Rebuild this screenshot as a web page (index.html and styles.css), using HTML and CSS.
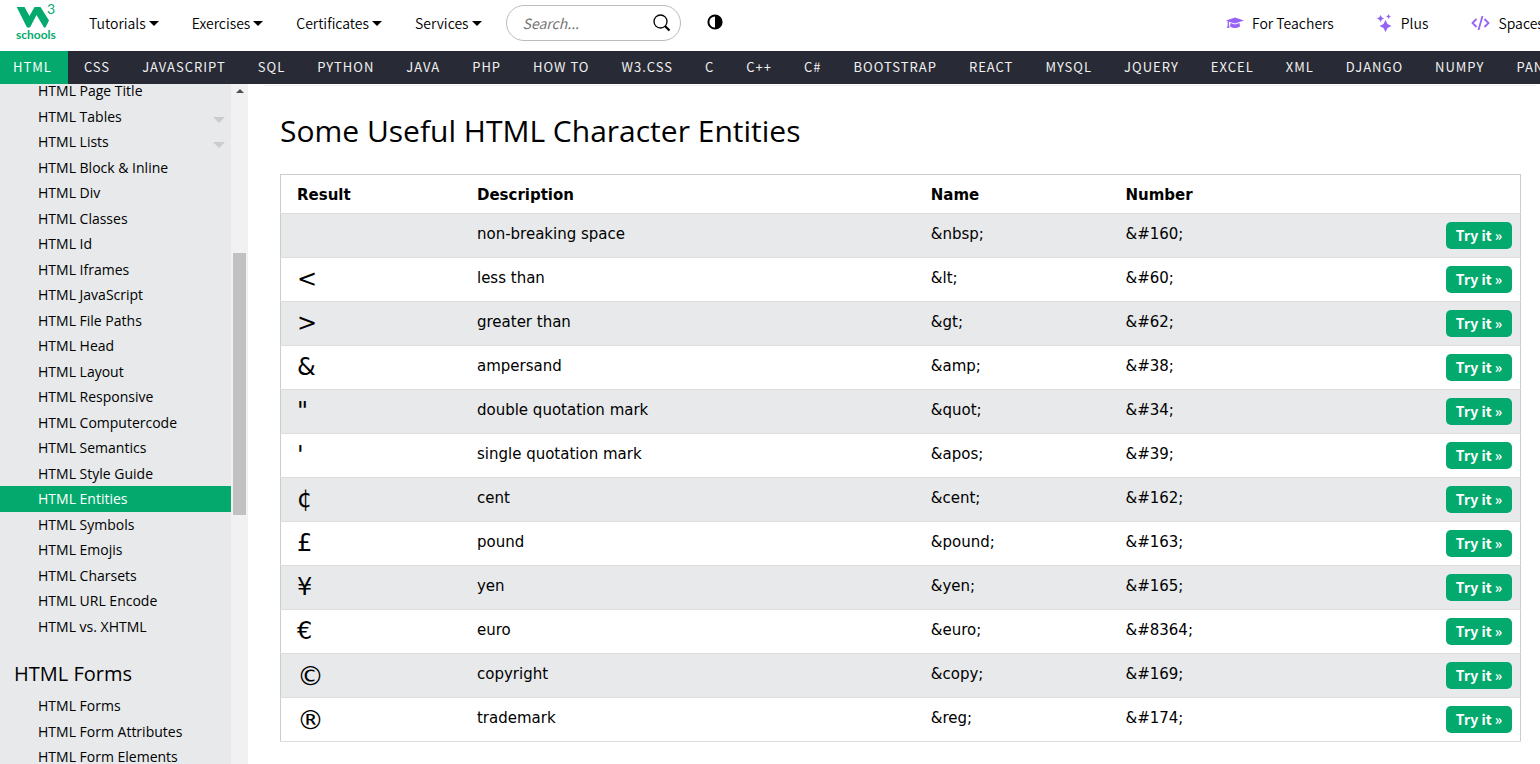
FILE: index.html
```html
<!DOCTYPE html>
<html lang="en">
<head>
<meta charset="utf-8">
<title>HTML Entities</title>
<link rel="stylesheet" href="styles.css">
</head>
<body>
<header class="topbar">
  <a class="logo" href="#" aria-label="W3Schools home">
    <svg width="44" height="40" viewBox="0 0 44 40">
      <path d="M0.700 4H8.500L13.500 13L18.500 4H24.500L33 17.500L29.500 24.500H28L20.500 12L14 24.500H11Z" fill="#04aa6d"/>
      <text x="31" y="11" class="logo-three">3</text>
      <text x="0" y="36" class="logo-word">schools</text>
    </svg>
  </a>
  <nav class="menus">
    <button class="menu">Tutorials<span class="caret"></span></button>
    <button class="menu">Exercises<span class="caret"></span></button>
    <button class="menu">Certificates<span class="caret"></span></button>
    <button class="menu">Services<span class="caret"></span></button>
  </nav>
  <form class="search">
    <input class="search-input" type="text" placeholder="Search..." aria-label="Search">
    <button class="search-button" type="button" aria-label="Search">
      <svg width="18" height="18" viewBox="0 0 18 18" fill="none" stroke="#000"><circle cx="7.500" cy="7.500" r="6.500" stroke-width="1.300"/><path d="M12 12L16.500 16.500" stroke-width="2.200"/></svg>
    </button>
  </form>
  <button class="theme" type="button" aria-label="Toggle dark mode">
    <svg width="16" height="16" viewBox="0 0 16 16"><circle cx="8" cy="8" r="6.600" fill="#fff" stroke="#000" stroke-width="2"/><path d="M8 1A7 7 0 0 1 8 15Z"/></svg>
  </button>
  <nav class="services">
    <a class="service" href="#"><svg width="18" height="16" viewBox="0 0 18 16" fill="#9763f6"><path d="M9 2.500L18 5.500L9 8.500L3 6.800V10L3.500 13H1L1.700 10V6.200L0 5.500Z"/><path d="M4.500 8L9 9.500L13.500 8L14 11.500Q9 14.500 4 11.500Z"/></svg>For Teachers</a>
    <a class="service" href="#"><svg width="16" height="18" viewBox="0 0 16 18" fill="#9763f6"><path d="M8.500 6L10.500 10L14.500 12L10.500 14L8.500 18L6.500 14L2.500 12L6.500 10Z"/><path d="M3.500 1L4.700 3.300L7 4.500L4.700 5.700L3.500 8L2.300 5.700L0 4.500L2.300 3.300Z"/><path d="M11.500 0L12.300 1.700L14 2.500L12.300 3.300L11.500 5L10.700 3.300L9 2.500L10.700 1.700Z"/></svg>Plus</a>
    <a class="service" href="#"><svg width="19" height="16" viewBox="0 0 19 16" fill="none" stroke="#9763f6" stroke-width="1.800"><path d="M5.500 4L1.500 8L5.500 12M13.500 4L17.500 8L13.500 12M11.500 1L7.500 15"/></svg>Spaces</a>
  </nav>
</header>
<nav class="subnav">
  <a class="current" href="#">HTML</a><a href="#">CSS</a><a href="#">JAVASCRIPT</a><a href="#">SQL</a><a href="#">PYTHON</a><a href="#">JAVA</a><a href="#">PHP</a><a href="#">HOW TO</a><a href="#">W3.CSS</a><a href="#">C</a><a href="#">C++</a><a href="#">C#</a><a href="#">BOOTSTRAP</a><a href="#">REACT</a><a href="#">MYSQL</a><a href="#">JQUERY</a><a href="#">EXCEL</a><a href="#">XML</a><a href="#">DJANGO</a><a href="#">NUMPY</a><a href="#">PANDAS</a>
</nav>
<div class="layout">
  <aside class="sidebar">
    <nav class="toc">
      <ul class="links first">
        <li><a href="#">HTML Page Title</a></li>
        <li><a href="#">HTML Tables<span class="more"></span></a></li>
        <li><a href="#">HTML Lists<span class="more"></span></a></li>
        <li><a href="#">HTML Block &amp; Inline</a></li>
        <li><a href="#">HTML Div</a></li>
        <li><a href="#">HTML Classes</a></li>
        <li><a href="#">HTML Id</a></li>
        <li><a href="#">HTML Iframes</a></li>
        <li><a href="#">HTML JavaScript</a></li>
        <li><a href="#">HTML File Paths</a></li>
        <li><a href="#">HTML Head</a></li>
        <li><a href="#">HTML Layout</a></li>
        <li><a href="#">HTML Responsive</a></li>
        <li><a href="#">HTML Computercode</a></li>
        <li><a href="#">HTML Semantics</a></li>
        <li><a href="#">HTML Style Guide</a></li>
        <li><a class="active" href="#">HTML Entities</a></li>
        <li><a href="#">HTML Symbols</a></li>
        <li><a href="#">HTML Emojis</a></li>
        <li><a href="#">HTML Charsets</a></li>
        <li><a href="#">HTML URL Encode</a></li>
        <li><a href="#">HTML vs. XHTML</a></li>
      </ul>
      <h2 class="toc-title">HTML Forms</h2>
      <ul class="links">
        <li><a href="#">HTML Forms</a></li>
        <li><a href="#">HTML Form Attributes</a></li>
        <li><a href="#">HTML Form Elements</a></li>
      </ul>
    </nav>
    <div class="scrollbar"><span class="scroll-up"></span><span class="thumb"></span></div>
  </aside>
  <main class="content">
    <hr class="rule">
    <h1 class="title">Some Useful HTML Character Entities</h1>
    <table class="entities">
      <thead>
        <tr><th class="col-result">Result</th><th class="col-description">Description</th><th class="col-name">Name</th><th class="col-number">Number</th><th></th></tr>
      </thead>
      <tbody>
        <tr><td class="symbol">&nbsp;</td><td>non-breaking space</td><td>&amp;nbsp;</td><td>&amp;#160;</td><td class="try"><a class="button" href="#">Try it »</a></td></tr>
        <tr><td class="symbol">&lt;</td><td>less than</td><td>&amp;lt;</td><td>&amp;#60;</td><td class="try"><a class="button" href="#">Try it »</a></td></tr>
        <tr><td class="symbol">&gt;</td><td>greater than</td><td>&amp;gt;</td><td>&amp;#62;</td><td class="try"><a class="button" href="#">Try it »</a></td></tr>
        <tr><td class="symbol">&amp;</td><td>ampersand</td><td>&amp;amp;</td><td>&amp;#38;</td><td class="try"><a class="button" href="#">Try it »</a></td></tr>
        <tr><td class="symbol">"</td><td>double quotation mark</td><td>&amp;quot;</td><td>&amp;#34;</td><td class="try"><a class="button" href="#">Try it »</a></td></tr>
        <tr><td class="symbol">'</td><td>single quotation mark</td><td>&amp;apos;</td><td>&amp;#39;</td><td class="try"><a class="button" href="#">Try it »</a></td></tr>
        <tr><td class="symbol">¢</td><td>cent</td><td>&amp;cent;</td><td>&amp;#162;</td><td class="try"><a class="button" href="#">Try it »</a></td></tr>
        <tr><td class="symbol">£</td><td>pound</td><td>&amp;pound;</td><td>&amp;#163;</td><td class="try"><a class="button" href="#">Try it »</a></td></tr>
        <tr><td class="symbol">¥</td><td>yen</td><td>&amp;yen;</td><td>&amp;#165;</td><td class="try"><a class="button" href="#">Try it »</a></td></tr>
        <tr><td class="symbol">€</td><td>euro</td><td>&amp;euro;</td><td>&amp;#8364;</td><td class="try"><a class="button" href="#">Try it »</a></td></tr>
        <tr><td class="symbol round">©</td><td>copyright</td><td>&amp;copy;</td><td>&amp;#169;</td><td class="try"><a class="button" href="#">Try it »</a></td></tr>
        <tr><td class="symbol round">®</td><td>trademark</td><td>&amp;reg;</td><td>&amp;#174;</td><td class="try"><a class="button" href="#">Try it »</a></td></tr>
      </tbody>
    </table>
  </main>
</div>
</body>
</html>
```
FILE: styles.css
```css
* { box-sizing: border-box; }

body {
  margin: 0;
  height: 100vh;
  display: flex;
  flex-direction: column;
  overflow: hidden;
  background: #fff;
  color: #000;
  font-family: Verdana, "DejaVu Sans", sans-serif;
  font-size: 15px;
}

a { color: inherit; text-decoration: none; }

button {
  padding: 0;
  border: 0;
  background: none;
  color: inherit;
  font: inherit;
}

svg { display: block; flex: none; overflow: visible; }

.topbar, .subnav, .button, .search-input { font-family: "Source Sans Pro", "Noto Sans CJK JP", sans-serif; }

/* Top bar */
.topbar {
  flex: none;
  display: flex;
  align-items: center;
  height: 51px;
  padding-left: 16px;
  padding-bottom: 5px;
  overflow: hidden;
  font-size: 14px;
  font-weight: 350;
}

.logo { margin-right: 29px; }
.logo-three { fill: #04aa6d; font: 400 14px Lato, sans-serif; }
.logo-word { fill: #04aa6d; font: 700 12px Lato, sans-serif; }

.menus { display: flex; gap: 33px; }
.menu { display: flex; align-items: center; gap: 3px; }

.caret {
  border: 5px solid transparent;
  border-top-color: #000;
  border-bottom: 0;
}

.search {
  display: flex;
  align-items: center;
  width: 175px;
  height: 36px;
  margin-left: 24px;
  padding: 0 9px 0 16px;
  border: 1px solid #bbb;
  border-radius: 18px;
}

.search-input {
  flex: 1;
  min-width: 0;
  padding: 0;
  border: 0;
  outline: 0;
  background: none;
  font-size: 14px;
  font-style: italic;
}

.search-input::placeholder { color: #757575; }
.theme { margin-left: 26px; padding-bottom: 3px; }

.services {
  display: flex;
  gap: 43px;
  width: 314px;
  margin-left: auto;
  white-space: nowrap;
}

.service { display: flex; align-items: center; gap: 8px; }

/* Language bar */
.subnav {
  flex: none;
  display: flex;
  height: 33px;
  overflow: hidden;
  background: #282a35;
  color: #f1f1f1;
  font-size: 13px;
  font-weight: 400;
  line-height: 32px;
  letter-spacing: 1px;
  white-space: nowrap;
}

.subnav a { padding: 0 16px; }
.subnav .current { padding-left: 13px; background: #04aa6d; color: #fff; }

/* Page body */
.layout { flex: 1; min-height: 0; display: flex; }

.sidebar {
  flex: none;
  display: flex;
  width: 248px;
  overflow: hidden;
  background: #e7e9eb;
  font-family: "Segoe UI", "Open Sans", sans-serif;
}

.toc { flex: 1; }

.links {
  margin: 0;
  padding: 0;
  list-style: none;
  line-height: 1.7em;
}

.first { margin-top: -6px; }

.links a {
  display: flex;
  justify-content: space-between;
  align-items: center;
  padding: 0 6px 0 38px;
  font-size: 14px;
}

.links .active { background: #04aa6d; color: #fff; }

.more {
  margin-top: 7px;
  border: 6px solid transparent;
  border-top-color: #ccc;
  border-bottom: 0;
}

.toc-title {
  margin: 0;
  padding: 20px 14px 4px;
  font-size: 20px;
  font-weight: 400;
  line-height: 30px;
}

.scrollbar {
  display: flex;
  flex-direction: column;
  align-items: center;
  width: 17px;
  background: #f1f1f1;
}

.scroll-up {
  margin: 5px 0 160px;
  border: 4px solid transparent;
  border-bottom-color: #505050;
  border-top: 0;
}

.thumb { width: 13px; height: 262px; background: #c1c1c1; }

.content { flex: 1; min-width: 0; padding: 0 19px 0 32px; }

.rule {
  height: 1px;
  margin: 1px -15px 0 -16px;
  border: 0;
  background: #eee;
}

.title {
  margin: 21px 0 19px;
  font-family: "Segoe UI", "Open Sans", sans-serif;
  font-size: 30px;
  font-weight: 400;
  line-height: 48px;
}

.entities {
  width: 100%;
  border: 1px solid #ccc;
  border-collapse: collapse;
  table-layout: fixed;
}

.entities tr { border-bottom: 1px solid #ddd; }
.entities tbody tr:nth-child(odd) { background: #e7e9eb; }

.entities th, .entities td {
  padding: 9px 8px 7px;
  text-align: left;
  vertical-align: top;
  line-height: 22px;
}

.entities th:first-child, .entities td:first-child { padding-left: 16px; }
.entities .symbol { padding-top: 8px; font-size: 24px; line-height: 27px; }
.entities .round { font-size: 27px; }
.col-result { width: 15.200%; }
.col-description { width: 36.600%; }
.col-name { width: 15.700%; }
.entities .try { padding: 8px; }

.button {
  display: block;
  width: 66px;
  margin-left: auto;
  padding-bottom: 1px;
  border-radius: 5px;
  background: #04aa6d;
  color: #fff;
  font-size: 14px;
  font-weight: 700;
  line-height: 26px;
  text-align: center;
}
```
